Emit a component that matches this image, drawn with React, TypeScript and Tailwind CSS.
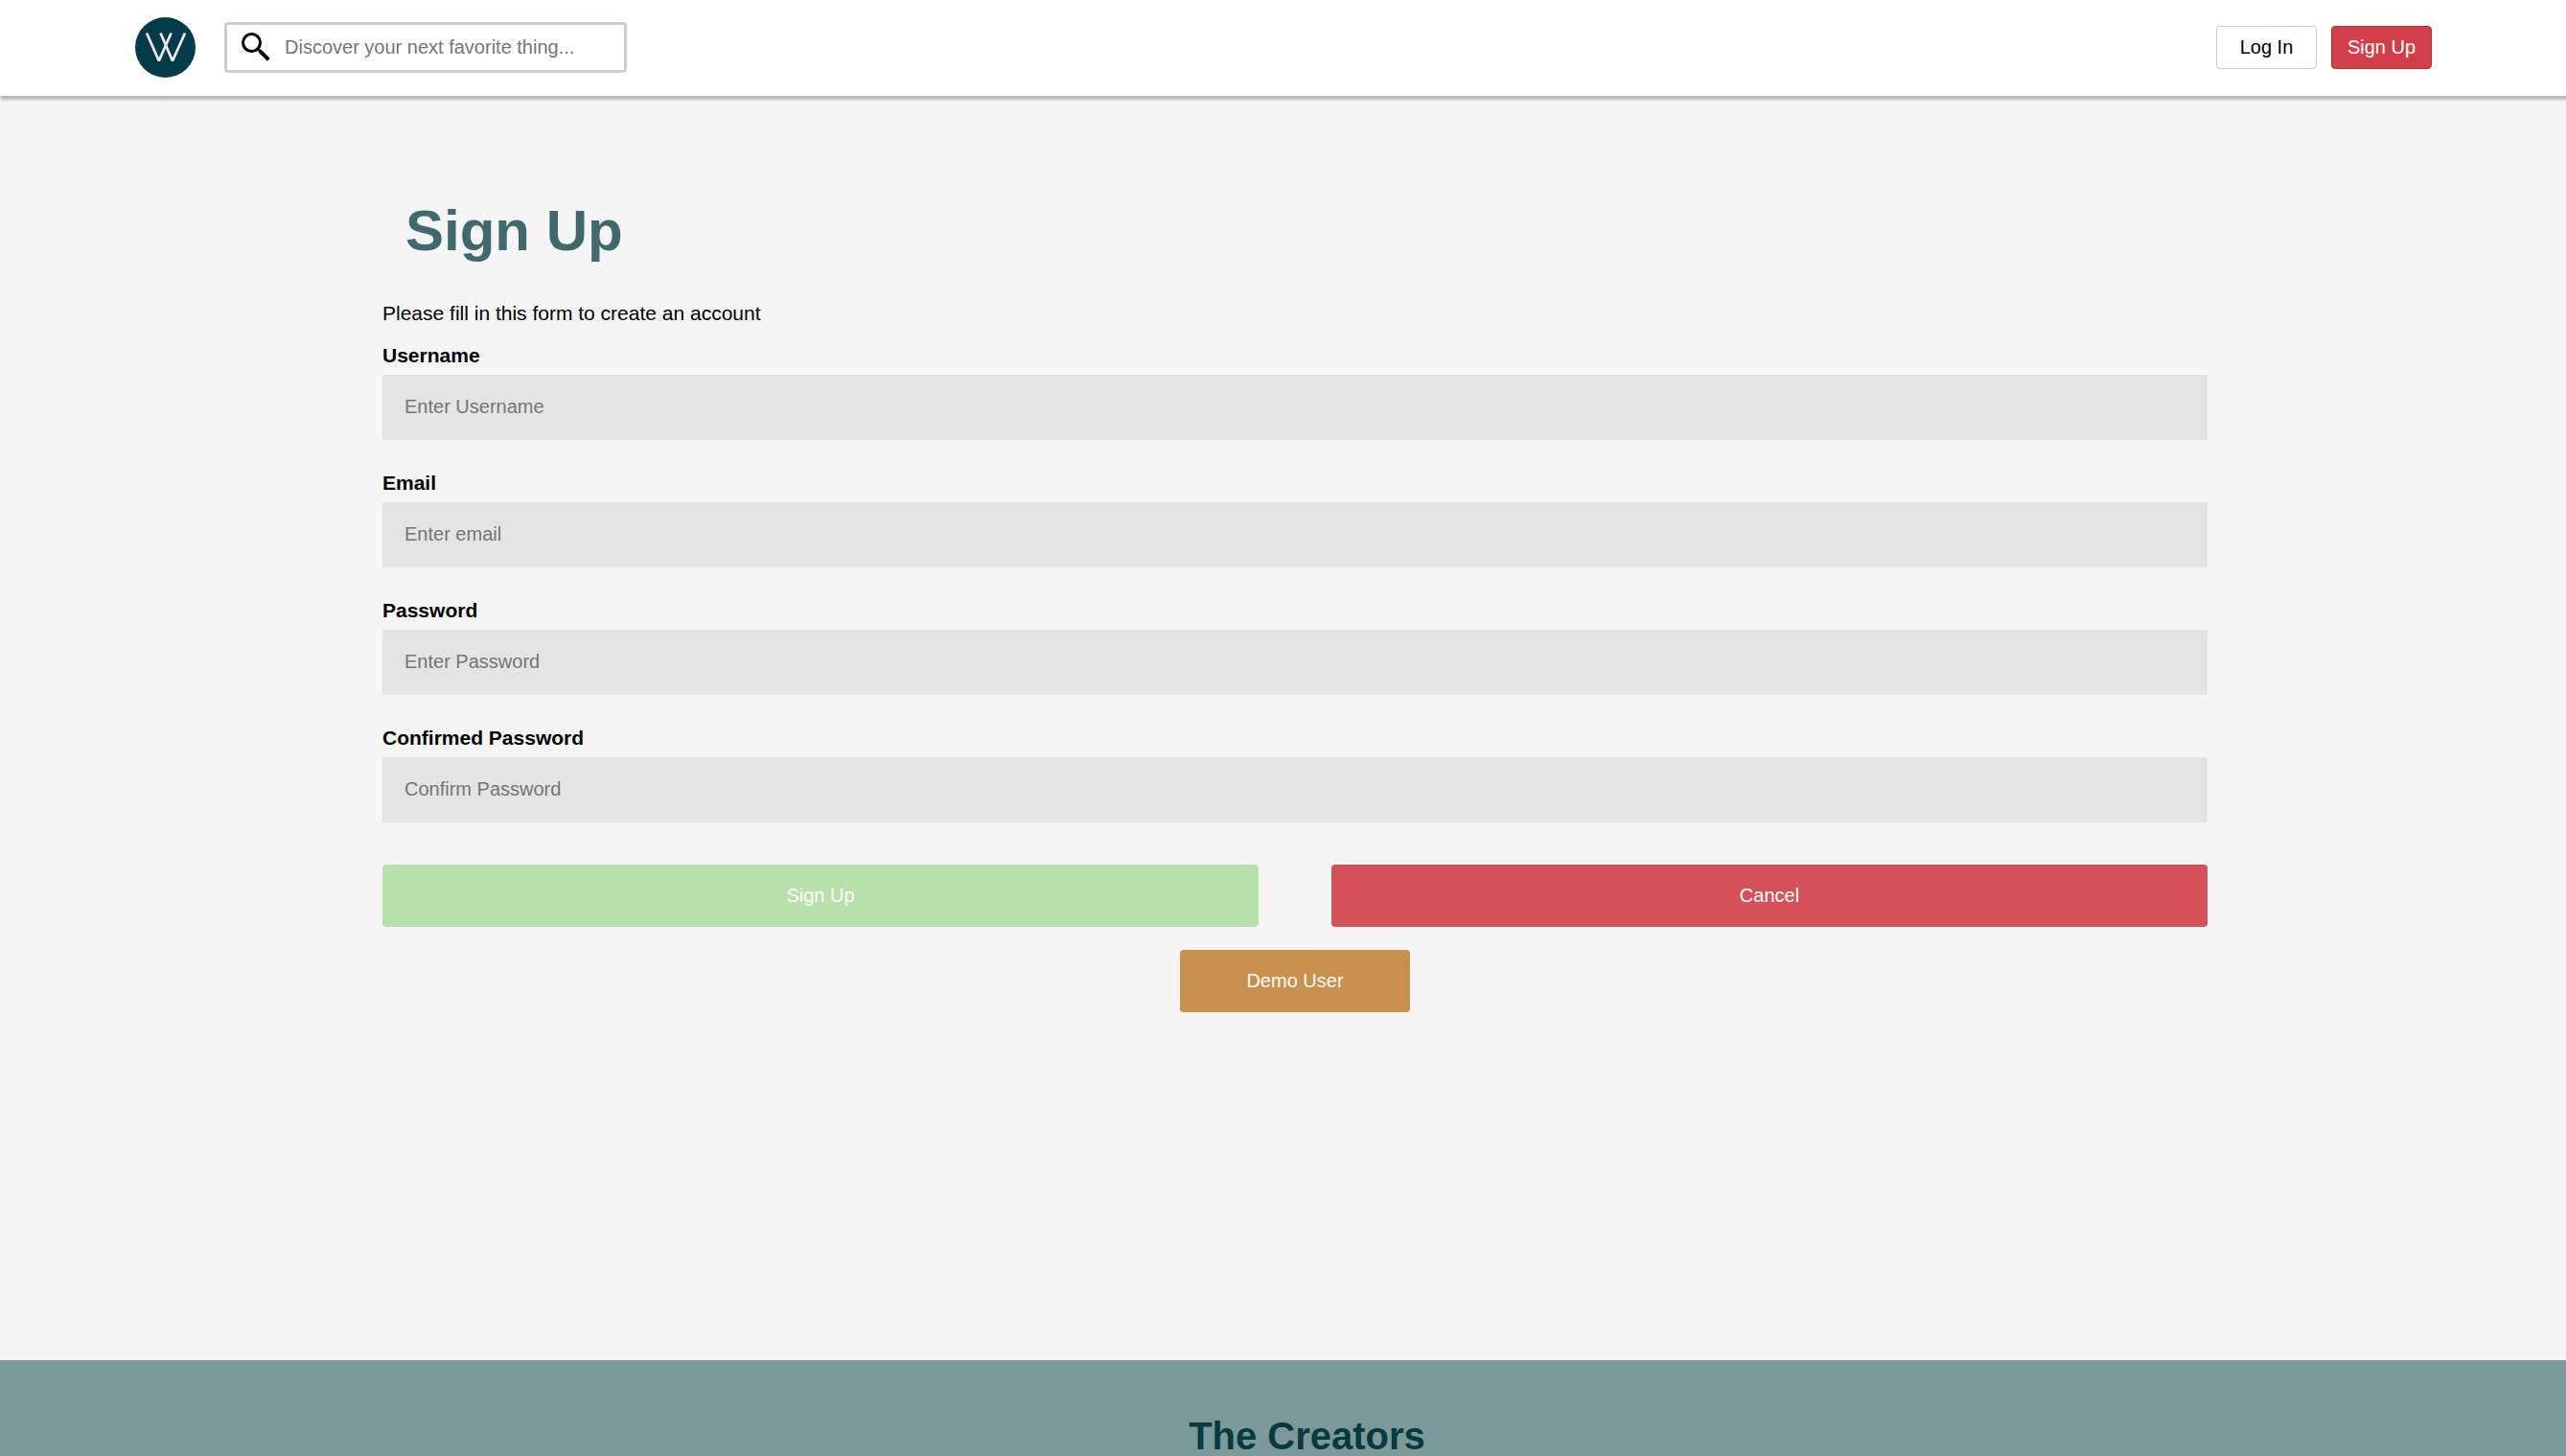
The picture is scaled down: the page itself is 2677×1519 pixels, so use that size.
import React from "react";

const fields = [
  { id: "username", label: "Username", placeholder: "Enter Username", type: "text" },
  { id: "email", label: "Email", placeholder: "Enter email", type: "email" },
  { id: "password", label: "Password", placeholder: "Enter Password", type: "password" },
  { id: "confirm", label: "Confirmed Password", placeholder: "Confirm Password", type: "password" },
];

function Logo() {
  return (
    <svg viewBox="0 0 63 63" className="size-[63px]" role="img" aria-label="Home">
      <circle cx="31.5" cy="31.5" r="31.5" fill="#033b4a" />
      <path
        d="M12 16.5 L24.8 45.5 L37.6 16.5 M26.5 16.5 L39 45.5 L52 16.5"
        fill="none"
        stroke="#ebe9e4"
        strokeWidth="2.8"
        strokeLinejoin="bevel"
      />
    </svg>
  );
}

function SearchIcon() {
  return (
    <svg viewBox="0 0 30 30" className="size-[30px] shrink-0" aria-hidden="true">
      <circle cx="10.5" cy="10.5" r="9" fill="none" stroke="#000" strokeWidth="3" />
      <path d="M16.5 16.5 L20 20" stroke="#000" strokeWidth="3" />
      <path d="M19 19 L28.3 28.3" stroke="#000" strokeWidth="4" />
    </svg>
  );
}

function Header() {
  return (
    <header className="relative flex h-[100px] items-center justify-between bg-white pr-[140px] pb-0.5 pl-[141px] shadow-[2px_3px_3px_1px_rgba(0,0,0,0.25)]">
      <div className="flex items-center gap-[30px]">
        <a href="#home">
          <Logo />
        </a>
        <label className="flex h-[53px] w-[420px] items-center gap-[15px] rounded border-[3px] border-[#cccccc] bg-white pl-[15px]">
          <SearchIcon />
          <input
            type="search"
            aria-label="Search"
            placeholder="Discover your next favorite thing..."
            className="min-w-0 flex-1 text-xl leading-6 outline-none placeholder:text-[#757575]"
          />
        </label>
      </div>
      <nav className="flex gap-[15px]">
        <button className="h-[45px] w-[105px] rounded border border-[#cccccc] bg-white text-xl leading-6">
          Log In
        </button>
        <button className="h-[45px] w-[105px] rounded border border-[#a8323b] bg-[#d23f49] text-xl leading-6 text-white">
          Sign Up
        </button>
      </nav>
    </header>
  );
}

export default function App() {
  return (
    <div className="h-screen overflow-hidden bg-[#f5f5f5] font-['Liberation_Sans',Arial,sans-serif] text-black">
      <Header />
      <main className="min-h-[1319px] pt-[106px] pl-[25px]">
        <form className="mx-auto w-full max-w-[1904px]" onSubmit={(e) => e.preventDefault()}>
          <h1 className="pl-6 text-[60px] leading-[70px] font-bold text-[#3f696d]">Sign Up</h1>
          <p className="mt-[39px] text-[21px] leading-6">Please fill in this form to create an account</p>
          <div className="mt-5 flex flex-col gap-[33px]">
            {fields.map((f) => (
              <div key={f.id} className="flex flex-col gap-2">
                <label htmlFor={f.id} className="text-[21px] leading-6 font-bold">
                  {f.label}
                </label>
                <input
                  id={f.id}
                  type={f.type}
                  placeholder={f.placeholder}
                  className="h-[68px] w-full bg-[#e4e4e4] px-[23px] pb-0.5 text-xl leading-6 outline-none placeholder:text-[#757575]"
                />
              </div>
            ))}
          </div>
          <div className="mt-11 grid grid-cols-2 gap-[76px] text-xl leading-6 text-white">
            <button type="submit" className="h-[65px] rounded bg-[#b7e0ab] pb-0.5">
              Sign Up
            </button>
            <button type="button" className="h-[65px] rounded bg-[#d55159] pb-0.5">
              Cancel
            </button>
          </div>
          <div className="mt-6 flex justify-center">
            <button type="button" className="h-[65px] w-60 rounded bg-[#c98f4d] pb-0.5 text-xl leading-6 text-white">
              Demo User
            </button>
          </div>
        </form>
      </main>
      <footer className="bg-[#7c9899] pt-14 pb-10 pl-[50px] text-center">
        <h2 className="text-[40px] leading-[46px] font-bold text-[#033b40]">The Creators</h2>
      </footer>
    </div>
  );
}
